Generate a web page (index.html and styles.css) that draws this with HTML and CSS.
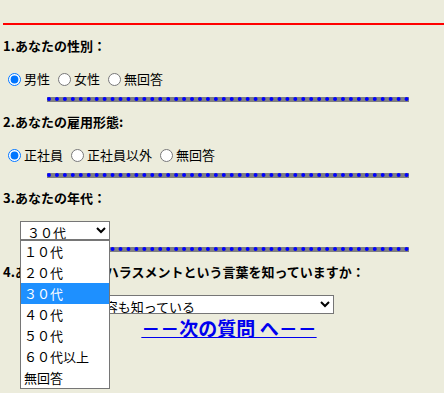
FILE: index.html
```html
<!DOCTYPE html>
<html lang="ja">
<head>
<meta charset="utf-8">
<title>アンケート</title>
<link rel="stylesheet" href="styles.css">
</head>
<body>
<div class="page">
  <div class="rule"></div>

  <section class="q">
    <p class="qt first">1.あなたの性別：</p>
    <div class="row">
      <label><input type="radio" name="sex" checked>男性</label>
      <label><input type="radio" name="sex">女性</label>
      <label><input type="radio" name="sex">無回答</label>
    </div>
    <div class="sep"></div>
  </section>

  <section class="q">
    <p class="qt">2.あなたの雇用形態:</p>
    <div class="row">
      <label><input type="radio" name="emp" checked>正社員</label>
      <label><input type="radio" name="emp">正社員以外</label>
      <label><input type="radio" name="emp">無回答</label>
    </div>
    <div class="sep"></div>
  </section>

  <section class="q">
    <p class="qt">3.あなたの年代：</p>
    <div class="row sel-row">
      <span class="sel-wrap">
        <select class="sel sel-age">
          <option>１０代</option>
          <option>２０代</option>
          <option selected>３０代</option>
          <option>４０代</option>
          <option>５０代</option>
          <option>６０代以上</option>
          <option>無回答</option>
        </select>
        <ul class="dropdown">
          <li>１０代</li>
          <li>２０代</li>
          <li class="hl">３０代</li>
          <li>４０代</li>
          <li>５０代</li>
          <li>６０代以上</li>
          <li class="plain">無回答</li>
        </ul>
      </span>
    </div>
    <div class="sep sep-tight"></div>
  </section>

  <section class="q">
    <p class="qt">4.あなたはパワーハラスメントという言葉を知っていますか：</p>
    <div class="row sel-row">
      <select class="sel sel-know">
        <option selected>言葉もその内容も知っている</option>
        <option>言葉だけは知っている</option>
        <option>知らない</option>
      </select>
    </div>
    <p class="next"><a href="#">－－次の質問 へ－－</a></p>
  </section>
</div>
</body>
</html>
```

FILE: styles.css
```css
html {
  background: #ececdc;
}
body {
  margin: 0;
  padding: 0 0 0 3px;
  background: #ececdc;
  color: #000;
  font-family: "Noto Sans CJK JP", "Noto Sans", sans-serif;
  font-size: 13px;
}
.page {
  min-height: 370px;
}
.rule {
  margin-top: 23px;
  height: 2px;
  background: #ff0000;
}
.q {
  margin: 0;
}
.qt {
  margin: 12px 0 0 0;
  font-weight: bold;
  font-size: 13px;
  line-height: 16px;
  white-space: nowrap;
}
.qt.first {
  margin-top: 13px;
}
.row {
  margin-top: 15px;
  height: 20px;
  line-height: 20px;
  white-space: nowrap;
}
.row input[type="radio"] {
  width: 13px;
  height: 13px;
  margin: 0 3px 0 5px;
  vertical-align: -2px;
}
.sep {
  margin: 8px 0 0 44px;
  width: 362px;
  height: 1px;
  border-top: 4px dotted #0000ff;
  background: #808080;
}
.sep-tight {
  margin-top: 7px;
}
.sel-row {
  height: 19px;
  line-height: 19px;
}
.sel-wrap {
  position: relative;
  display: inline-block;
  margin-left: 17px;
  vertical-align: top;
}
.sel {
  box-sizing: border-box;
  height: 19px;
  padding: 0 0 0 2px;
  border: 1px solid #767676;
  background: #fff;
  color: #000;
  font-family: "Noto Sans CJK JP", "Noto Sans", sans-serif;
  font-size: 13px;
  vertical-align: top;
}
.sel-age {
  width: 90px;
}
.sel-know {
  width: 314px;
  margin-left: 17px;
}
.dropdown {
  position: absolute;
  left: 0;
  top: 19px;
  z-index: 10;
  box-sizing: border-box;
  width: 90px;
  margin: 0;
  padding: 0;
  list-style: none;
  border: 1px solid #767676;
  background: #fff;
}
.dropdown li {
  height: 21px;
  line-height: 21px;
  padding-left: 3px;
  font-size: 13px;
  color: #000;
  white-space: nowrap;
}
.dropdown li.hl {
  background: #1e90ff;
  color: #fff;
}
.next {
  margin: 3px 0 0 0;
  padding-left: 11px;
  text-align: center;
  font-size: 19px;
  line-height: 22px;
  font-weight: bold;
}
.next a {
  color: #0000ee;
  text-decoration: underline;
}
```
